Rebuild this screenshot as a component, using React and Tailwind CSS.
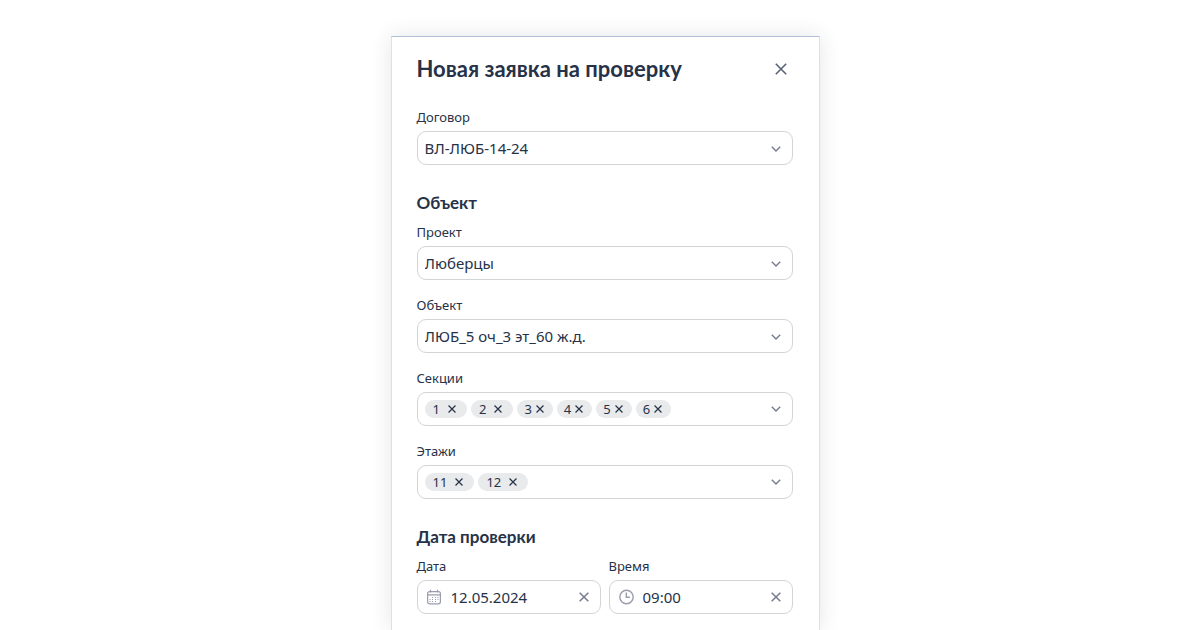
import React, { useId, useState } from 'react';

const CrossIcon = ({ className, strokeWidth = 1.8 }) => (
  <svg viewBox="0 0 12 12" className={className} fill="none" stroke="currentColor" strokeWidth={strokeWidth} aria-hidden="true">
    <path d="M0.8 0.8l10.4 10.4M11.2 0.8L0.8 11.2" />
  </svg>
);

const ChevronIcon = ({ className }) => (
  <svg viewBox="0 0 10 6" className={className} fill="none" stroke="currentColor" strokeWidth="1.4" aria-hidden="true">
    <path d="M0.8 0.8L5 4.9l4.2-4.1" />
  </svg>
);

const CalendarIcon = () => (
  <svg viewBox="0 0 14 16" className="h-4 w-3.5 shrink-0 text-[#9a9dab]" fill="none" stroke="currentColor" strokeWidth="1.2" aria-hidden="true">
    <rect x="0.6" y="2.6" width="12.8" height="12.2" rx="2" />
    <path d="M0.6 5.9h12.8M3.5 0.8v2.8M10.5 0.8v2.8" />
    <path
      d="M5 8.5h1M8 8.5h1M10.5 8.5h1M2.5 10.5h1M5 10.5h1M8 10.5h1M10.5 10.5h1M2.5 12.5h1M5 12.5h1M8 12.5h1"
      strokeWidth="1"
    />
  </svg>
);

const ClockIcon = () => (
  <svg viewBox="0 0 16 16" className="h-4 w-4 shrink-0 text-[#9a9dab]" fill="none" stroke="currentColor" strokeWidth="1.4" aria-hidden="true">
    <circle cx="7.5" cy="8" r="6.7" />
    <path d="M7.3 3.6v4.7h3.6" />
  </svg>
);

const labelClass = 'block self-start text-[13px] leading-4';
const boxClass = 'h-[34px] w-full rounded-[9px] border border-[#d3d4d8] bg-white';

const SelectField = ({ label, options }) => {
  const id = useId();

  return (
    <div className="flex flex-col gap-1.5">
      <label htmlFor={id} className={labelClass}>{label}</label>
      <div className="relative">
        <select id={id} className={`${boxClass} appearance-none pl-[7px] pr-8 text-[15px] leading-5`}>
          {options.map((option) => (
            <option key={option}>{option}</option>
          ))}
        </select>
        <ChevronIcon className="pointer-events-none absolute right-3 top-[15px] h-1.5 w-2.5 text-[#757b8a]" />
      </div>
    </div>
  );
};

const TagsField = ({ label, initialTags }) => {
  const id = useId();
  const [tags, setTags] = useState(initialTags);

  return (
    <div className="flex flex-col gap-1.5">
      <span id={id} className={labelClass}>{label}</span>
      <div role="group" aria-labelledby={id} className={`${boxClass} flex items-center gap-1 pl-[7px] pr-[11px]`}>
        {tags.map((tag) => (
          <span
            key={tag.value}
            className={`flex h-[18px] items-center rounded-full bg-[#e9eaec] text-[13px] leading-[18px] ${
              tag.wide ? 'gap-2 pl-2 pr-[11px]' : 'gap-1 pl-[7px] pr-[9px]'
            }`}
          >
            {tag.value}
            <button
              type="button"
              aria-label={`Удалить ${tag.value}`}
              onClick={() => setTags((prev) => prev.filter((item) => item.value !== tag.value))}
            >
              <CrossIcon className="h-2 w-2" />
            </button>
          </span>
        ))}
        <button type="button" aria-label={`Открыть: ${label}`} className="ml-auto">
          <ChevronIcon className="h-1.5 w-2.5 text-[#757b8a]" />
        </button>
      </div>
    </div>
  );
};

const ClearableField = ({ label, icon, initialValue }) => {
  const id = useId();
  const [value, setValue] = useState(initialValue);

  return (
    <div className="flex min-w-0 flex-col gap-1.5">
      <label htmlFor={id} className={labelClass}>{label}</label>
      <div className={`${boxClass} flex items-center gap-2 pl-[9px] pr-[11px]`}>
        <span className="w-4">{icon}</span>
        <input
          id={id}
          value={value}
          onChange={(event) => setValue(event.target.value)}
          className="min-w-0 flex-1 bg-transparent text-[15px] leading-5 outline-none"
        />
        <button type="button" aria-label="Очистить" onClick={() => setValue('')}>
          <CrossIcon className="h-2.5 w-2.5 text-[#757b8a]" />
        </button>
      </div>
    </div>
  );
};

const sections = [
  { value: '1', wide: true },
  { value: '2', wide: true },
  { value: '3' },
  { value: '4' },
  { value: '5' },
  { value: '6' },
];

const floors = [
  { value: '11', wide: true },
  { value: '12', wide: true },
];

const App = () => (
  <div className="flex h-screen justify-center overflow-hidden bg-white px-4 pt-9 font-['Noto_Sans',sans-serif] text-[#263248]">
    <form className="ml-2.5 h-full w-full max-w-[429px] border border-b-0 border-x-[#dddfec] border-t-[#b3bfd6] bg-white pl-[25px] pr-[26px] pt-4 shadow-[0_0_20px_rgba(38,50,72,0.12)]">
      <header className="flex items-center justify-between pr-1.5">
        <h1 className="font-['Lato','Noto_Sans',sans-serif] text-[22px] font-bold leading-8">Новая заявка на проверку</h1>
        <button type="button" aria-label="Закрыть">
          <CrossIcon className="h-3 w-3 text-[#596274]" strokeWidth={1.6} />
        </button>
      </header>

      <div className="mt-6">
        <SelectField label="Договор" options={['ВЛ-ЛЮБ-14-24']} />
      </div>

      <h2 className="mt-[26px] font-['Lato','Noto_Sans',sans-serif] text-[17px] font-bold leading-6">Объект</h2>
      <div className="mt-[9px] flex flex-col gap-[17px]">
        <SelectField label="Проект" options={['Люберцы']} />
        <SelectField label="Объект" options={['ЛЮБ_5 оч_3 эт_60 ж.д.']} />
        <TagsField label="Секции" initialTags={sections} />
        <TagsField label="Этажи" initialTags={floors} />
      </div>

      <h2 className="mt-[26px] font-['Lato','Noto_Sans',sans-serif] text-[17px] font-bold leading-6">Дата проверки</h2>
      <div className="mt-[9px] grid grid-cols-2 gap-2">
        <ClearableField label="Дата" icon={<CalendarIcon />} initialValue="12.05.2024" />
        <ClearableField label="Время" icon={<ClockIcon />} initialValue="09:00" />
      </div>
    </form>
  </div>
);

export default App;
